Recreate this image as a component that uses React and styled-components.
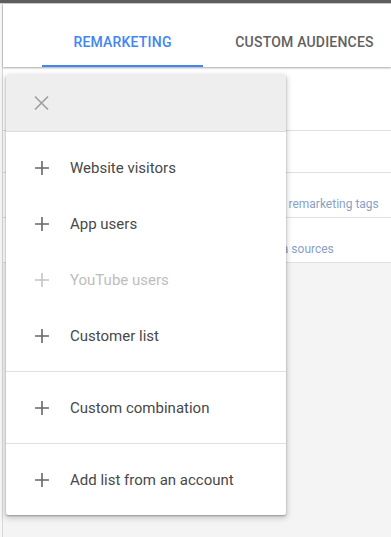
import React from 'react';
import styled, { createGlobalStyle } from 'styled-components';

const GlobalStyle = createGlobalStyle`
    html, body {
        margin: 0;
        padding: 0;
        background: #f7f7f7;
        font-family: Roboto, 'Liberation Sans', Arial, sans-serif;
    }
`;

const Page = styled.div`
    position: relative;
    display: flex;
    flex-direction: column;
    min-height: 100vh;
    background: #f7f7f7;
`;

const TopBar = styled.div`
    height: 3px;
    background: #5e5e5e;
    border-bottom: 1px solid #cfcfcf;
`;

const Frame = styled.div`
    flex: 1;
    display: flex;
    flex-direction: column;
    margin-left: 2px;
    border-left: 1px solid #d6d6d6;
    background: #f4f4f4;
`;

const Header = styled.div`
    position: relative;
    z-index: 1;
    display: flex;
    align-items: flex-end;
    height: 63px;
    padding-left: 39px;
    background: #fff;
    box-shadow: 0 1px 2px rgba(0, 0, 0, .35);
`;

const Tab = styled.div`
    flex: none;
    display: flex;
    align-items: center;
    justify-content: center;
    box-sizing: border-box;
    width: ${({ width }) => width}px;
    height: 48px;
    font-size: 14px;
    font-weight: 500;
    letter-spacing: .2px;
    white-space: nowrap;
    color: ${({ active }) => (active ? '#4285f4' : '#616161')};
    border-bottom: 2px solid ${({ active }) => (active ? '#4285f4' : 'transparent')};
`;

const Table = styled.div`
    background: #fff;
`;

const Row = styled.div`
    display: flex;
    align-items: flex-end;
    box-sizing: border-box;
    height: ${({ height }) => height}px;
    padding: 0 0 5px 224px;
    border-bottom: 1px solid #e0e0e0;
`;

const Description = styled.span`
    font-size: 12px;
    line-height: 16px;
    white-space: nowrap;
    color: #8a9fc4;
`;

const Menu = styled.div`
    position: absolute;
    z-index: 2;
    top: 75px;
    left: 6px;
    width: 280px;
    background: #fff;
    border-radius: 2px;
    overflow: hidden;
    box-shadow: 0 1px 2px rgba(0, 0, 0, .3), 0 2px 6px 1px rgba(0, 0, 0, .18);
`;

const MenuHeader = styled.div`
    display: flex;
    align-items: center;
    height: 56px;
    padding-left: 23px;
    background: #eeeeee;
    border-bottom: 1px solid #dcdcdc;
`;

const Section = styled.div`
    padding: 8px 0 7px;
    & + & {
        border-top: 1px solid #e0e0e0;
    }
`;

const Item = styled.div`
    display: flex;
    align-items: center;
    height: 56px;
    padding-left: 24px;
    gap: 16px;
    font-size: 15px;
    color: ${({ disabled }) => (disabled ? '#bdbdbd' : '#484848')};
`;

const PlusIcon = ({ color }) => (
    <svg width="24" height="24" viewBox="0 0 24 24">
        <path d="M19 12.8h-6.2V19h-1.6v-6.2H5v-1.6h6.2V5h1.6v6.2H19v1.6z" fill={color} />
    </svg>
);

const CloseIcon = () => (
    <svg width="26" height="26" viewBox="0 0 26 26">
        <path d="M6 6.5L19 19.5M19 6.5L6 19.5" stroke="#9e9e9e" strokeWidth="1.6" fill="none" />
    </svg>
);

const groups = [
    [
        { label: 'Website visitors' },
        { label: 'App users' },
        { label: 'YouTube users', disabled: true },
        { label: 'Customer list' },
    ],
    [{ label: 'Custom combination' }],
    [{ label: 'Add list from an account' }],
];

export default function App() {
    return (
        <>
            <GlobalStyle />
            <Page>
                <TopBar />
                <Frame>
                    <Header>
                        <Tab active width={161}>REMARKETING</Tab>
                        <Tab width={203}>CUSTOM AUDIENCES</Tab>
                    </Header>
                    <Table>
                        <Row height={64} />
                        <Row height={42} />
                        <Row height={45}>
                            <Description>Install your remarketing tags</Description>
                        </Row>
                        <Row height={45}>
                            <Description>Export data sources</Description>
                        </Row>
                    </Table>
                </Frame>
                <Menu>
                    <MenuHeader>
                        <CloseIcon />
                    </MenuHeader>
                    {groups.map((group, i) => (
                        <Section key={i}>
                            {group.map(item => (
                                <Item key={item.label} disabled={item.disabled}>
                                    <PlusIcon color={item.disabled ? '#c4c4c4' : '#666'} />
                                    <span>{item.label}</span>
                                </Item>
                            ))}
                        </Section>
                    ))}
                </Menu>
            </Page>
        </>
    );
}
